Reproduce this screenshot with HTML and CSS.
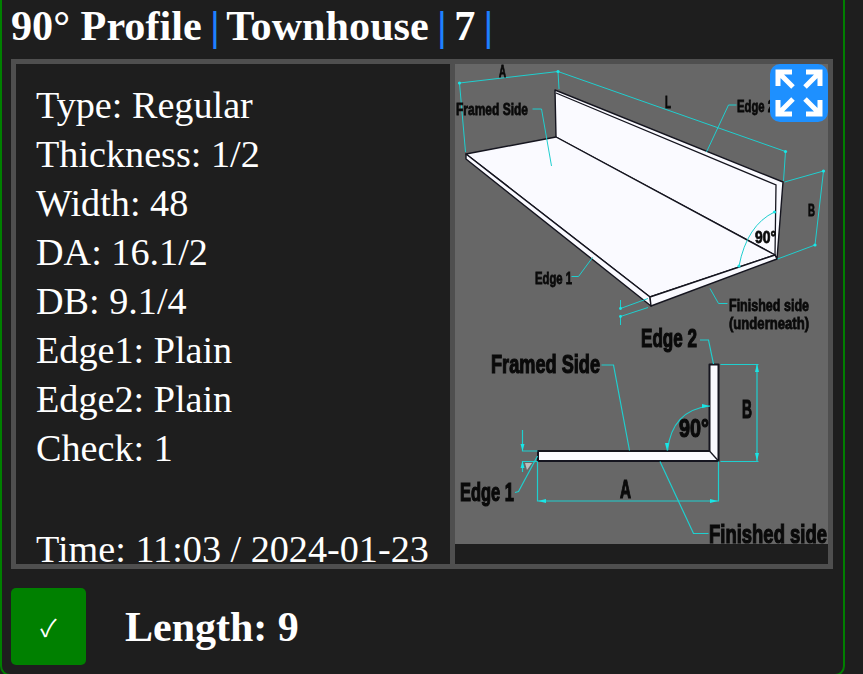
FILE: index.html
```html
<!DOCTYPE html>
<html lang="en">
<head>
    <meta charset="UTF-8">
    <title>90° Profile</title>
    <link rel="stylesheet" href="styles.css">
</head>
<body>

<div class="card">
    <h2 class="card-title">90° Profile <span class="sep">|</span> Townhouse <span class="sep">|</span> 7 <span class="sep">|</span></h2>

    <div class="frame">
        <div class="details">
            Type: Regular<br>
            Thickness: 1/2<br>
            Width: 48<br>
            DA: 16.1/2<br>
            DB: 9.1/4<br>
            Edge1: Plain<br>
            Edge2: Plain<br>
            Check: 1<br>
            <div class="time">Time: 11:03 / 2024-01-23</div>
        </div>
        <div class="drawing">
            <svg class="drawing-img" viewBox="455 64 373 480" width="373" height="480">
                <rect x="455" y="64" width="373" height="480" fill="#676767"/>

                <!-- perspective view -->
                <polygon class="part" points="555,90 783,182 777,259 775,255 556,137"/>
                <polygon class="part" points="466,154 556,137 775,255 650,297"/>
                <polygon class="part" points="466,154 650,297 651,306 466,159"/>
                <polygon class="part" points="775,255 777,259 651,306 650,297"/>
                <path class="thin" d="M556 93 L776 185 L775 255"/>

                <g class="dim">
                    <path d="M459.5 83 L558 71.5 L785.5 151.5 L783.5 181"/>
                    <path d="M459.5 83 L465.5 152"/>
                    <path d="M558 71.5 L559 89"/>
                    <path d="M736.5 105 H728.5 L706.5 152"/>
                    <path d="M532.5 109 H541.5 L551.5 166"/>
                    <path d="M784.5 182 L823.5 171 L815 245 L777.5 259"/>
                    <path d="M774.5 212 Q747 225 739 266"/>
                    <path d="M571.5 276.5 H578.5 L592.5 257.5"/>
                    <path d="M710 288.5 L718.5 303.5 H727.5"/>
                    <path d="M620.5 300 V308.5 L648 298.5"/>
                    <path d="M620.5 325 V316.5 L648 307.5"/>
                    <circle cx="459.5" cy="83" r="1.6"/>
                    <circle cx="558" cy="71.5" r="1.6"/>
                    <circle cx="785.5" cy="151.5" r="1.6"/>
                    <circle cx="823.5" cy="171" r="1.6"/>
                    <circle cx="815" cy="245" r="1.6"/>
                    <circle cx="774.5" cy="212" r="1.6"/>
                    <circle cx="739" cy="266" r="1.6"/>
                    <circle cx="620.5" cy="308.5" r="1.4"/>
                    <circle cx="620.5" cy="316.5" r="1.4"/>
                </g>

                <text class="lbl sm" x="499" y="77" textLength="7" lengthAdjust="spacingAndGlyphs">A</text>
                <text class="lbl sm" x="456" y="115" textLength="72" lengthAdjust="spacingAndGlyphs">Framed Side</text>
                <text class="lbl sm" x="665" y="108" textLength="6" lengthAdjust="spacingAndGlyphs">L</text>
                <text class="lbl sm" x="737" y="112" textLength="37" lengthAdjust="spacingAndGlyphs">Edge 2</text>
                <text class="lbl sm" x="808" y="216" textLength="7" lengthAdjust="spacingAndGlyphs">B</text>
                <text class="lbl sm" x="755" y="243" textLength="21" lengthAdjust="spacingAndGlyphs">90°</text>
                <text class="lbl sm" x="535" y="284" textLength="37" lengthAdjust="spacingAndGlyphs">Edge 1</text>
                <text class="lbl sm" x="729" y="311" textLength="80" lengthAdjust="spacingAndGlyphs">Finished side</text>
                <text class="lbl sm" x="729" y="329" textLength="80" lengthAdjust="spacingAndGlyphs">(underneath)</text>

                <!-- section view -->
                <polygon class="part part-lg" points="538,451 709.5,451 709.5,364.5 718.5,364.5 718.5,461 538,461"/>
                <path class="thin" d="M709.5 451 L718.5 461"/>
                <polygon points="525,463 532,463 527,470" fill="#bdbdbd"/>

                <g class="dim dim-lg">
                    <path d="M700 340 H708.5 L713.5 364"/>
                    <path d="M601.5 365 H613.5 L629.5 450.5"/>
                    <path d="M720.5 364.5 H758.5 M720.5 461.5 H758.5 M757 364.5 V461.5"/>
                    <path d="M710 406 Q672 410 667.5 450.5"/>
                    <path d="M515 492.5 L518.5 491.5 L537.5 456"/>
                    <path d="M522.5 430 V451 H537.5 M522.5 472 V461.5 H537.5"/>
                    <path d="M537.5 461.5 V501.5 M718.5 461.5 V501.5 M537.5 501 H718.5"/>
                    <path d="M660 461.5 L693.5 533.5 H708.5"/>
                </g>
                <g class="dim-head">
                    <polygon points="757,364 755,372 759,372"/>
                    <polygon points="757,461 755,453 759,453"/>
                    <polygon points="710,406 702,404 702,408"/>
                    <polygon points="667,451 665,443 669,443"/>
                    <polygon points="538,501 546,499 546,503"/>
                    <polygon points="718,501 710,499 710,503"/>
                    <polygon points="522.5,451 520.5,444 524.5,444"/>
                    <polygon points="522.5,461 520.5,468 524.5,468"/>
                </g>

                <text class="lbl lg" x="641" y="347" textLength="56" lengthAdjust="spacingAndGlyphs">Edge 2</text>
                <text class="lbl lg" x="491" y="373" textLength="109" lengthAdjust="spacingAndGlyphs">Framed Side</text>
                <text class="lbl lg" x="679" y="437" textLength="30" lengthAdjust="spacingAndGlyphs">90°</text>
                <text class="lbl lg" x="742" y="418" textLength="10" lengthAdjust="spacingAndGlyphs">B</text>
                <text class="lbl lg" x="460" y="501" textLength="54" lengthAdjust="spacingAndGlyphs">Edge 1</text>
                <text class="lbl lg" x="620" y="498" textLength="11" lengthAdjust="spacingAndGlyphs">A</text>
                <text class="lbl lg" x="709" y="543" textLength="118" lengthAdjust="spacingAndGlyphs">Finished side</text>
            </svg>
            <button class="expand-btn" type="button" aria-label="Expand">
                <svg viewBox="0 0 58 58" width="58" height="58">
                    <path d="M8 22 V8 H22 M8 8 L23 23"/>
                    <path d="M36 8 H50 V22 M50 8 L35 23"/>
                    <path d="M8 36 V50 H22 M8 50 L23 35"/>
                    <path d="M36 50 H50 V36 M50 50 L35 35"/>
                </svg>
            </button>
        </div>
    </div>

    <div class="card-foot">
        <button class="check-btn" type="button">✓</button>
        <h2 class="length">Length: 9</h2>
    </div>
</div>

</body>
</html>
```

FILE: styles.css
```css
html, body {
    height: 100%;
}
body {
    margin: 0;
    overflow: hidden;
    background-color: #1e1e1e;
    color: white;
    font-family: 'Liberation Serif', 'Times New Roman', serif;
}

/* Tarjeta */
.card {
    box-sizing: border-box;
    width: 845px;
    height: 696px;
    margin-top: -20px;
    padding: 20px 9px 0 9px;
    background-color: #1e1e1e;
    border: 2px solid green;
    border-radius: 10px;
}
.card-title {
    margin: 0;
    font-size: 42.2px;
    line-height: 48px;
    height: 57px;
    white-space: nowrap;
}
.sep {
    margin: 0 -3px 0 -2px;
    color: #1e80ff;
}

/* Marco gris */
.frame {
    display: flex;
    gap: 5px;
    box-sizing: border-box;
    width: 822px;
    height: 510px;
    border: 5px solid #4f4f4f;
    background-color: #4f4f4f;
}
.details {
    box-sizing: border-box;
    width: 434px;
    padding: 17px 0 0 20px;
    overflow: hidden;
    background-color: #1e1e1e;
    font-size: 38.2px;
    line-height: 49px;
    white-space: nowrap;
}
.time {
    margin-top: 52px;
}
.drawing {
    position: relative;
    width: 373px;
    background-color: #1e1e1e;
}
.drawing-img {
    display: block;
    filter: blur(0.35px);
}
.part {
    fill: #fafaff;
    stroke: #15151f;
    stroke-width: 1.4;
    stroke-linejoin: round;
}
.part-lg {
    stroke-width: 2;
}
.thin {
    fill: none;
    stroke: #15151f;
    stroke-width: 1.3;
}
.dim path {
    fill: none;
    stroke: #1fcfcf;
    stroke-width: 1;
}
.dim-lg path {
    stroke-width: 1.2;
}
.dim circle, .dim-head polygon {
    fill: #19e6e6;
}
.lbl {
    font-family: 'Liberation Sans', Arial, sans-serif;
    font-weight: bold;
    fill: #0a0a0a;
    stroke: #0a0a0a;
}
.sm {
    font-size: 17px;
    stroke-width: 0.8;
}
.lg {
    font-size: 26px;
    stroke-width: 1.2;
}

/* Botones */
.expand-btn {
    position: absolute;
    top: 0;
    right: 0;
    width: 58px;
    height: 58px;
    padding: 0;
    border: none;
    border-radius: 10px;
    background-color: #1e90ff;
}
.expand-btn svg {
    display: block;
    fill: none;
    stroke: white;
    stroke-width: 5;
}
.card-foot {
    display: flex;
    align-items: center;
    gap: 39px;
    margin-top: 19px;
}
.check-btn {
    width: 75px;
    height: 77px;
    padding: 0;
    border: none;
    border-radius: 5px;
    background-color: green;
    color: white;
    font-family: 'Noto Sans CJK SC', 'DejaVu Sans', sans-serif;
    font-size: 24px;
}
.length {
    margin: 0;
    font-size: 42px;
    line-height: 48px;
}
```
